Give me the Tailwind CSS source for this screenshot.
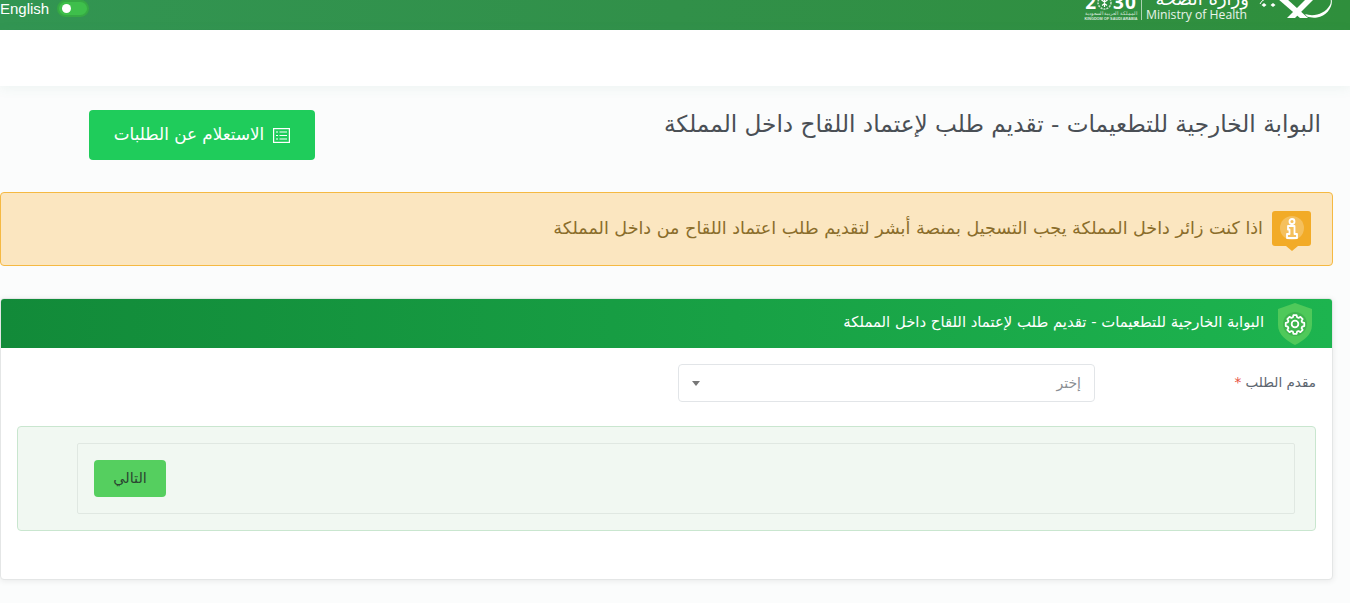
<!DOCTYPE html>
<html lang="ar" dir="rtl">
<head>
    <meta charset="UTF-8">
    <title>البوابة الخارجية للتطعيمات</title>
    <script src="https://cdn.jsdelivr.net/npm/@tailwindcss/browser@4"></script>
</head>
<body class="bg-[#fbfcfc] font-['DejaVu_Sans',sans-serif] w-[1350px] h-[603px] overflow-hidden">
    <!-- header -->
    <header class="h-[30px] bg-gradient-to-l from-[#2f8f3c] via-[#319049] to-[#329552] flex justify-between overflow-hidden" dir="ltr">
        <div class="flex items-start h-[30px]">
            <span class="text-[15px] leading-[18px] text-white font-['Liberation_Sans',sans-serif]">English</span>
            <span class="ml-[8px] w-[32px] h-[17px] rounded-full bg-[#3ebf4b] border-[2px] border-[#36a944] flex items-center pl-[3px]">
                <span class="w-[9px] h-[9px] rounded-full bg-white"></span>
            </span>
        </div>
        <div class="flex items-start h-[30px] pr-[10px]">
            <!-- 2030 logo -->
            <div class="w-[52px] flex flex-col items-center text-white">
                <div class="mt-[-6px] h-[16px] flex items-center font-bold text-[19px] leading-[16px] font-['Open_Sans',sans-serif]">
                    <span>2</span>
                    <svg class="w-[15px] h-[15px] mx-[1px]" viewBox="0 0 15 15" fill="none">
                        <circle cx="7.5" cy="7.5" r="6.5" stroke="#fff" stroke-opacity=".7" stroke-width="1.6" stroke-dasharray="2 1"/>
                        <path d="M7.5 3v9M4.5 5l3 2 3-2M5 10.5l2.5-2 2.5 2" stroke="#fff" stroke-width="1.2"/>
                    </svg>
                    <span class="tracking-[1px]">30</span>
                </div>
                <span class="mt-[1px] text-[5px] leading-[5px] whitespace-nowrap opacity-80 font-['Noto_Sans',sans-serif]">المملكة العربية السعودية</span>
                <span class="mt-[1px] text-[3.8px] leading-[4px] font-bold whitespace-nowrap opacity-80 font-['Liberation_Sans',sans-serif]">KINGDOM OF SAUDI ARABIA</span>
            </div>
            <div class="w-px h-[20px] bg-white/60 ml-[4px] mr-[4px]"></div>
            <div class="w-[103px] flex flex-col text-white mr-[1px]">
                <span class="mt-[-10px] h-[15px] text-[18px] leading-[18px] text-right" dir="rtl">وزارة الصحة</span>
                <span class="mt-[2px] text-[12.200px] leading-[16px] text-white/90 font-['Open_Sans',sans-serif] whitespace-nowrap">Ministry of Health</span>
            </div>
            <!-- palm and swords mark -->
            <svg class="w-[90px] h-[30px]" viewBox="0 0 90 30" fill="none">
                <path d="M10 4 Q11 1 15 -1" stroke="#fff" stroke-width="1"/>
                <path d="M14 3 L16.500 5 L14 7 L11.500 5 Z M23 3 L25.500 5 L23 7 L20.500 5 Z" fill="#fff"/>
                <path d="M28 -1 H37 L58 18 H50 Z" fill="#fff"/>
                <path d="M56 -1 H64 L45 18 H37 Z" fill="#fff"/>
                <path d="M55 14 C 64 17 75 14 80 5 C 81 3 81 1 80.500 -1 L 81.500 -1 C 83.500 6 77 16 67 17.500 C 63 18 60 17.500 57 16.500 Z" fill="#fff"/>
            </svg>
        </div>
    </header>

    <!-- white nav strip -->
    <div class="h-[56px] bg-white shadow-[0_2px_12px_rgba(60,140,110,0.08)]"></div>

    <main class="relative">
        <!-- title row -->
        <div class="h-[106px] flex justify-between items-start pr-[29px] pl-[89px]">
            <h1 class="mt-[23px] text-[23.2px] leading-[30px] text-[#4a4f55] whitespace-nowrap">البوابة الخارجية للتطعيمات - تقديم طلب لإعتماد اللقاح داخل المملكة</h1>
            <button class="mt-[24px] w-[226px] h-[50px] bg-[#1fcc5b] rounded-[4px] text-white text-[16.800px] flex items-center justify-center gap-[9px]">
                <svg class="w-[17px] h-[15px]" viewBox="0 0 17 15" fill="none" stroke="#fff" stroke-width="1.2">
                    <rect x="0.6" y="0.6" width="15.8" height="13.8"/>
                    <path d="M3 4h2M3 7.5h2M3 11h2M6.5 4h7.5M6.5 7.5h7.5M6.5 11h7.5"/>
                </svg>
                <span>الاستعلام عن الطلبات</span>
            </button>
        </div>

        <!-- notice -->
        <div class="ml-0 mr-[17px] h-[74px] bg-[#fbe6c0] border border-[#f5b942] rounded-[4px] flex items-center pr-[21px] gap-[9px]">
            <span class="relative w-[39px] h-[35px] mt-[-2px] rounded-[3px] bg-[#f2ab27] flex items-center justify-center shrink-0">
                <span class="w-[24px] h-[24px] rounded-full bg-white/25 flex items-center justify-center">
                    <svg class="w-[12px] h-[21px]" viewBox="0 0 12 21" fill="none" stroke="#fff" stroke-width="1.8" stroke-linejoin="round">
                        <circle cx="6" cy="3.500" r="2.500"/>
                        <path d="M2 8h6.500v8H11v4H1v-4h2.500v-4.500H2z"/>
                    </svg>
                </span>
                <span class="absolute bottom-[-5px] left-[14px] w-0 h-0 border-x-[6px] border-x-transparent border-t-[5px] border-t-[#f2ab27]"></span>
            </span>
            <p class="text-[17.560px] leading-[24px] text-[#8a6d2b] mt-[-2px] whitespace-nowrap">اذا كنت زائر داخل المملكة يجب التسجيل بمنصة أبشر لتقديم طلب اعتماد اللقاح من داخل المملكة</p>
        </div>

        <!-- form card -->
        <section class="mt-[32px] mr-[17px] ml-0 h-[282px] bg-white border border-[#e4e6e6] rounded-[4px] shadow-[0_1px_6px_rgba(0,0,0,0.08)] overflow-hidden">
            <div class="h-[49px] bg-gradient-to-l from-[#1db44f] to-[#128a39] flex items-center pr-[19px] gap-[13px]">
                <svg class="w-[36px] h-[42px] shrink-0" viewBox="0 0 36 42" fill="none">
                    <path d="M18 0 L35 6 V22 C35 32 26 38 18 42 C10 38 1 32 1 22 V6 Z" fill="#4fc95a"/>
                    <circle cx="18" cy="21" r="12" fill="#3fb54e"/>
                    <g transform="translate(18 21) scale(.8) translate(-18 -21)">
                        <path d="M16 11.5h4l.6 2.6 1.900.8 2.300-1.400 2.800 2.800-1.400 2.300.8 1.900 2.600.6v4l-2.600.6-.8 1.900 1.400 2.300-2.800 2.800-2.300-1.400-1.900.8-.6 2.600h-4l-.6-2.600-1.900-.8-2.300 1.400-2.800-2.800 1.400-2.300-.8-1.900-2.600-.6v-4l2.600-.6.8-1.900-1.400-2.300 2.800-2.800 2.300 1.400 1.900-.8z" transform="translate(0 -1.500)" stroke="#fff" stroke-width="2.200" stroke-linejoin="round"/>
                        <circle cx="18" cy="21" r="4.200" stroke="#fff" stroke-width="2.200"/>
                    </g>
                </svg>
                <h2 class="text-[14.850px] leading-[20px] text-white mt-[-4px] whitespace-nowrap">البوابة الخارجية للتطعيمات - تقديم طلب لإعتماد اللقاح داخل المملكة</h2>
            </div>
            <div class="px-[16px] pt-[16px]">
                <div class="flex items-start">
                    <label class="w-[184px] pt-[8px] text-[13.500px] leading-[20px] text-[#5d6670]">مقدم الطلب <span class="text-[#e8543f]">*</span></label>
                    <div class="mr-[37px] w-[417px] h-[38px] border border-[#e2e5e8] rounded-[4px] flex items-center justify-between px-[13px] text-[14px] text-[#8b8f94]">
                        <span>إختر</span>
                        <span class="w-0 h-0 border-x-[4px] border-x-transparent border-t-[5px] border-t-[#777]"></span>
                    </div>
                </div>
                <div class="mt-[24px] h-[105px] bg-[#f1f8f2] border border-[#c9e6cf] rounded-[4px] pt-[16px] pr-[20px] pl-[59px]">
                    <div class="h-[71px] border border-[#e0e8e2] rounded-[2px] pt-[16px] pl-[16px] flex justify-end">
                        <button class="w-[72px] h-[37px] bg-[#55cf5f] rounded-[4px] text-[14.500px] text-[#2b4531]">التالي</button>
                    </div>
                </div>
            </div>
        </section>
    </main>
</body>
</html>
